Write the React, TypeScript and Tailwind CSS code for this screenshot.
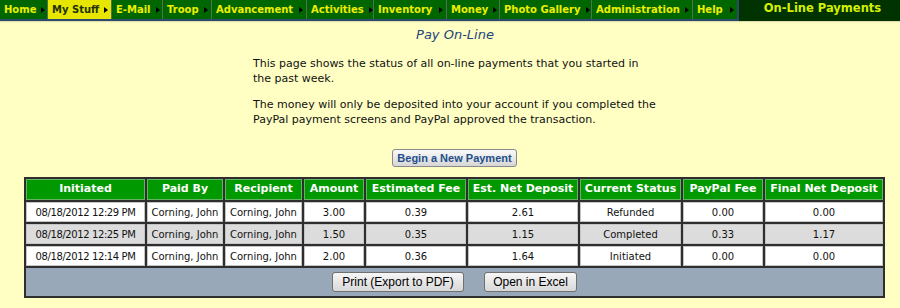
const navItems: [string, string][] = [
  ["Home", "w-[48px]"],
  ["My Stuff", "w-[64px]"],
  ["E-Mail", "w-[51px]"],
  ["Troop", "w-[49px]"],
  ["Advancement", "w-[95px]"],
  ["Activities", "w-[67px]"],
  ["Inventory", "w-[73px]"],
  ["Money", "w-[53px]"],
  ["Photo Gallery", "w-[92px]"],
  ["Administration", "w-[101px]"],
  ["Help", "flex-1"],
];

const rows = [
  ["08/18/2012 12:29 PM", "Corning, John", "Corning, John", "3.00", "0.39", "2.61", "Refunded", "0.00", "0.00"],
  ["08/18/2012 12:25 PM", "Corning, John", "Corning, John", "1.50", "0.35", "1.15", "Completed", "0.33", "1.17"],
  ["08/18/2012 12:14 PM", "Corning, John", "Corning, John", "2.00", "0.36", "1.64", "Initiated", "0.00", "0.00"],
];

const headers = [
  ["Initiated", "w-[119px]"],
  ["Paid By", "w-[76px]"],
  ["Recipient", "w-[77px]"],
  ["Amount", "w-[60px]"],
  ["Estimated Fee", "w-[100px]"],
  ["Est. Net Deposit", "w-[110px]"],
  ["Current Status", "w-[101px]"],
  ["PayPal Fee", "w-[80px]"],
  ["Final Net Deposit", "w-[118px]"],
];

const font = "font-['DejaVu_Sans',Verdana,sans-serif]";
const arial = "font-['Liberation_Sans',Arial,sans-serif]";

function Arrow() {
  return <span className="ml-auto inline-block h-0 w-0 shrink-0 border-y-[3.5px] border-l-[4px] border-y-transparent border-l-black" />;
}

export default function App() {
  return (
    <div className={`h-[308px] w-[900px] overflow-hidden bg-[#ffffc4] ${font}`}>
      {/* Top menu */}
      <div className="flex h-[21px] bg-[#003300] shadow-[0_1px_1px_rgba(0,0,0,0.12)]">
        <div className="flex h-[21px] w-[739px] border-b-2 border-r-2 border-[#2b4a6e] bg-[#006600]">
          {navItems.map(([item, w], i) => (
            <div
              key={item}
              className={`${w} flex h-full shrink-0 items-center whitespace-nowrap border-r border-[#50705a] pl-[4px] pr-[3px] text-[10px] font-bold ${
                i === 1 ? "bg-[#e6e600] text-[#223300]" : "text-[#eeee00]"
              } ${i === navItems.length - 1 ? "border-r-0" : ""}`}
            >
              <span className="mr-[5px]">{item}</span>
              <Arrow />
            </div>
          ))}
        </div>
        <div className="flex flex-1 items-start justify-center pl-[6px] pt-[1px] text-[11.5px] font-bold leading-[15px] text-[#d4f000]">
          On-Line Payments
        </div>
      </div>

      {/* Intro */}
      <div className="pl-[10px] pt-[6px] text-center text-[13px] italic leading-[15px] text-[#24467a]">Pay On-Line</div>
      <div className="ml-[253px] mt-[14px] w-[405px] text-[11px] leading-[15px] text-[#111]">
        <p>This page shows the status of all on-line payments that you started in the past week.</p>
        <p className="mt-[11px]">
          The money will only be deposited into your account if you completed the PayPal payment screens and PayPal approved the transaction.
        </p>
      </div>

      <div className="mt-[22px] flex justify-center pl-[9px]">
        <button
          className={`h-[18px] rounded-[3px] border border-[#8a8a8a] bg-gradient-to-b from-[#fafafa] to-[#d6d6d6] px-[4px] ${arial} text-[11px] font-bold leading-[16px] text-[#1f4f8a]`}
        >
          Begin a New Payment
        </button>
      </div>

      {/* Table */}
      <div className="ml-[24px] mt-[10px] w-[861px] bg-[#2e2e2e]">
        <table className="w-full table-fixed border-separate border-spacing-[2px]">
          <thead>
            <tr>
              {headers.map(([h, w]) => (
                <th
                  key={h}
                  className={`${w} h-[21px] whitespace-nowrap border border-[#66b366] bg-[#009900] p-0 text-center text-[11px] font-bold text-white`}
                >
                  {h}
                </th>
              ))}
            </tr>
          </thead>
          <tbody>
            {rows.map((r, ri) => (
              <tr key={ri}>
                {r.map((c, ci) => (
                  <td
                    key={ci}
                    className={`h-[20px] whitespace-nowrap border border-[#c4c4c4] p-0 text-center text-[10px] text-[#111] ${
                      ci === 0 ? "tracking-[-0.4px]" : ""
                    } ${ri === 1 ? "bg-[#dcdcdc]" : "bg-white"}`}
                  >
                    {c}
                  </td>
                ))}
              </tr>
            ))}
            <tr>
              <td colSpan={9} className="h-[28px] bg-[#98a8b8] p-0">
                <div className={`flex justify-center gap-[20px] ${arial} text-[12px]`}>
                  <button className="h-[20px] w-[132px] rounded-[3px] border border-[#707070] bg-gradient-to-b from-[#f6f6f6] to-[#d8d8d8] text-black">
                    Print (Export to PDF)
                  </button>
                  <button className="h-[20px] w-[93px] rounded-[3px] border border-[#707070] bg-gradient-to-b from-[#f6f6f6] to-[#d8d8d8] text-black">
                    Open in Excel
                  </button>
                </div>
              </td>
            </tr>
          </tbody>
        </table>
      </div>
    </div>
  );
}
